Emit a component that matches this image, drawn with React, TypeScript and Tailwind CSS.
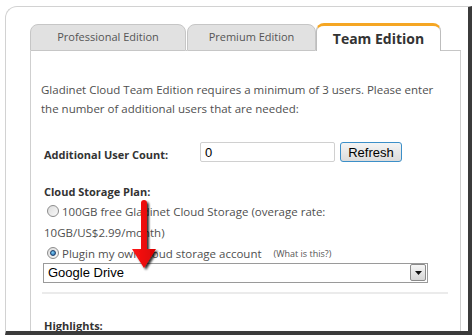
import React from "react";

function Radio({ checked }: { checked?: boolean }) {
  return (
    <span className="w-[12px] h-[12px] rounded-full border border-[#8c8c8c] bg-gradient-to-br from-[#dcdcdc] to-[#fafafa] flex items-center justify-center shrink-0">
      {checked && (
        <span className="w-[6px] h-[6px] rounded-full bg-[radial-gradient(circle_at_40%_35%,#7fd0f5,#1b5fa8)] border border-[#1d3f6b]" />
      )}
    </span>
  );
}

export default function App() {
  return (
    <div
      className="w-[472px] h-[336px] bg-white overflow-hidden relative pt-[6px] pl-[5px] text-[#4f4f4f]"
      style={{ fontFamily: '"Open Sans", "Noto Sans", sans-serif' }}
    >
      <div className="w-[467px] h-[329px] bg-white border-l border-t border-l-[#d2d2d2] border-t-[#d2d2d2] border-r-[4px] border-b-[4px] border-r-[#3b3b3b] border-b-[#3b3b3b] rounded-tl-[12px] overflow-hidden pl-[24px] pt-[17px]">
        <div className="w-[431px]">
          {/* tabs */}
          <div className="flex items-end h-[27px]">
            <div className="w-[156px] h-[27px] bg-[#e1e1e1] border border-[#c6c6c6] rounded-t-[8px] flex items-center justify-center text-[11px] text-[#555]">
              Professional Edition
            </div>
            <div className="w-[1px] h-[27px] border-b border-[#c6c6c6]" />
            <div className="w-[129px] h-[27px] bg-[#e1e1e1] border border-[#c6c6c6] rounded-t-[8px] flex items-center justify-center text-[11px] text-[#555]">
              Premium Edition
            </div>
            <div className="w-[125px] h-[28px] bg-white border-x border-[#bdbdbd] border-t-[3px] border-t-[#f5a623] rounded-t-[8px] flex items-center justify-center text-[14px] font-bold text-[#333] pb-[1px]">
              Team Edition
            </div>
            <div className="flex-1 h-[27px] border-b border-[#c6c6c6]" />
          </div>
          {/* panel */}
          <div className="h-[300px] border-x border-[#cfcfcf] pl-[10px] pt-[29px]">
            <p className="text-[11.5px] leading-[19px] text-[#4f4f4f]">
              Gladinet Cloud Team Edition requires a minimum of 3 users. Please enter
              <br />
              the number of additional users that are needed:
            </p>
            <div className="flex items-center mt-[23px] pl-[3px]">
              <div className="w-[156px] text-[11px] font-bold text-[#333] pt-[6px]">Additional User Count:</div>
              <div
                className="w-[135px] h-[20px] border border-[#d0d0d0] rounded-[2px] flex items-center pl-[4px] text-[13px] text-black"
                style={{ fontFamily: '"Liberation Sans", Arial, sans-serif' }}
              >
                0
              </div>
              <div
                className="ml-[5px] w-[62px] h-[20px] border border-[#3c8fc8] rounded-[3px] bg-gradient-to-b from-[#f4f4f4] to-[#dcdcdc] flex items-center justify-center text-[13px] text-black"
                style={{ fontFamily: '"Liberation Sans", Arial, sans-serif' }}
              >
                Refresh
              </div>
            </div>
            <div className="mt-[18px] pl-[3px] text-[11px] font-bold text-[#333] leading-[19px]">Cloud Storage Plan:</div>
            <div className="pl-[6px] flex items-center gap-[3px] text-[11.5px] leading-[21px]">
              <Radio />
              <span>100GB free Gladinet Cloud Storage (overage rate:</span>
            </div>
            <div className="pl-[3px] text-[11.5px] leading-[21px]">10GB/US$2.99/month)</div>
            <div className="pl-[6px] flex items-center gap-[3px] text-[11.5px] leading-[21px]">
              <Radio checked />
              <span>Plugin my own cloud storage account</span>
              <span className="ml-[9px] text-[9px] text-[#555]">(What is this?)</span>
            </div>
            <div
              className="mt-[-1px] ml-[2px] w-[385px] h-[20px] border border-[#9a9a9a] flex items-center justify-between pl-[4px] pr-px text-[13px] text-black"
              style={{ fontFamily: '"Liberation Sans", Arial, sans-serif' }}
            >
              <span>Google Drive</span>
              <span className="w-[16px] h-[17px] border border-[#8a8a8a] rounded-[2px] bg-gradient-to-b from-[#f6f6f6] to-[#d6d6d6] flex items-center justify-center">
                <svg width="7" height="4" viewBox="0 0 7 4">
                  <path d="M0 0 L7 0 L3.5 4 Z" fill="#111" />
                </svg>
              </span>
            </div>
            <div className="mt-[9px] ml-px w-[406px] h-[2px] bg-[#ebebeb]" />
            <div className="mt-[22px] pl-[3px] text-[11px] font-bold text-[#333] leading-[19px]">Highlights:</div>
          </div>
        </div>
      </div>
      {/* red arrow annotation */}
      <svg className="absolute left-[128px] top-[196px]" width="34" height="80" viewBox="0 0 34 80">
        <defs>
          <filter id="sh" x="-50%" y="-50%" width="200%" height="200%">
            <feGaussianBlur in="SourceAlpha" stdDeviation="1.2" />
            <feOffset dx="2" dy="2" result="o" />
            <feComponentTransfer>
              <feFuncA type="linear" slope="0.8" />
            </feComponentTransfer>
            <feMerge>
              <feMergeNode />
              <feMergeNode in="SourceGraphic" />
            </feMerge>
          </filter>
          <linearGradient id="rg" x1="0" x2="1" y1="0" y2="0">
            <stop offset="0" stopColor="#ff1a1a" />
            <stop offset="1" stopColor="#d80000" />
          </linearGradient>
        </defs>
        <g filter="url(#sh)">
          <path d="M13 7 Q13 4 16 4 Q19 4 19 7 L19 53 L28 53 L16 72 L4 53 L13 53 Z" fill="url(#rg)" />
        </g>
      </svg>
    </div>
  );
}
